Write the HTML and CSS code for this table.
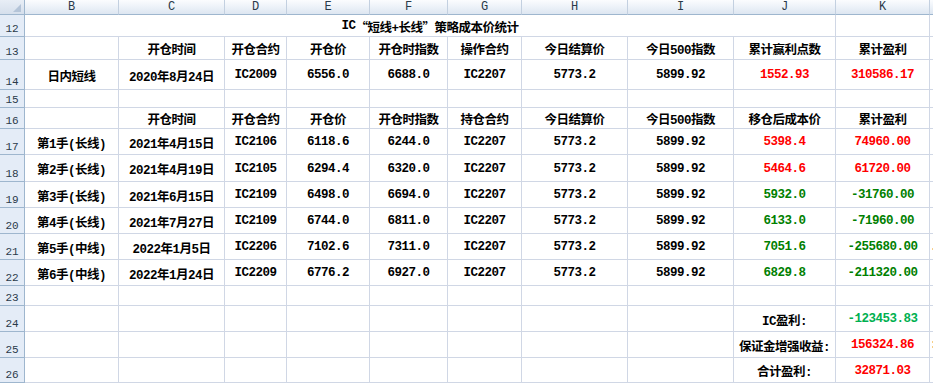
FILE: index.html
```html
<!DOCTYPE html>
<html lang="zh">
<head>
<meta charset="utf-8">
<title>IC策略成本价统计</title>
<link rel="stylesheet" href="styles.css">
</head>
<body>
<div class="sheet">
  <div class="h corner"><span class="tri"></span></div>
  <div class="h">B</div><div class="h">C</div><div class="h">D</div><div class="h">E</div><div class="h">F</div><div class="h">G</div><div class="h">H</div><div class="h">I</div><div class="h">J</div><div class="h">K</div><div class="h edge"></div>

  <div class="r">12</div>
  <div class="c title">IC<span class="q">“</span>短线+长线<span class="q">”</span>策略成本价统计</div><div class="c"></div><div class="c edge"></div>

  <div class="r">13</div>
  <div class="c"></div><div class="c">开仓时间</div><div class="c">开仓合约</div><div class="c">开仓价</div><div class="c">开仓时指数</div><div class="c">操作合约</div><div class="c">今日结算价</div><div class="c">今日500指数</div><div class="c">累计赢利点数</div><div class="c">累计盈利</div><div class="c edge"></div>

  <div class="r">14</div>
  <div class="c">日内短线</div><div class="c">2020年8月24日</div><div class="c">IC2009</div><div class="c">6556.0</div><div class="c">6688.0</div><div class="c">IC2207</div><div class="c">5773.2</div><div class="c">5899.92</div><div class="c red">1552.93</div><div class="c red">310586.17</div><div class="c edge"></div>

  <div class="r">15</div>
  <div class="c"></div><div class="c"></div><div class="c"></div><div class="c"></div><div class="c"></div><div class="c"></div><div class="c"></div><div class="c"></div><div class="c"></div><div class="c"></div><div class="c edge"></div>

  <div class="r">16</div>
  <div class="c"></div><div class="c">开仓时间</div><div class="c">开仓合约</div><div class="c">开仓价</div><div class="c">开仓时指数</div><div class="c">持仓合约</div><div class="c">今日结算价</div><div class="c">今日500指数</div><div class="c">移仓后成本价</div><div class="c">累计盈利</div><div class="c edge"></div>

  <div class="r">17</div>
  <div class="c">第1手(长线)</div><div class="c">2021年4月15日</div><div class="c">IC2106</div><div class="c">6118.6</div><div class="c">6244.0</div><div class="c">IC2207</div><div class="c">5773.2</div><div class="c">5899.92</div><div class="c red">5398.4</div><div class="c red">74960.00</div><div class="c edge"></div>

  <div class="r">18</div>
  <div class="c">第2手(长线)</div><div class="c">2021年4月19日</div><div class="c">IC2105</div><div class="c">6294.4</div><div class="c">6320.0</div><div class="c">IC2207</div><div class="c">5773.2</div><div class="c">5899.92</div><div class="c red">5464.6</div><div class="c red">61720.00</div><div class="c edge"></div>

  <div class="r">19</div>
  <div class="c">第3手(长线)</div><div class="c">2021年6月15日</div><div class="c">IC2109</div><div class="c">6498.0</div><div class="c">6694.0</div><div class="c">IC2207</div><div class="c">5773.2</div><div class="c">5899.92</div><div class="c green">5932.0</div><div class="c green">-31760.00</div><div class="c edge"></div>

  <div class="r">20</div>
  <div class="c">第4手(长线)</div><div class="c">2021年7月27日</div><div class="c">IC2109</div><div class="c">6744.0</div><div class="c">6811.0</div><div class="c">IC2207</div><div class="c">5773.2</div><div class="c">5899.92</div><div class="c green">6133.0</div><div class="c green">-71960.00</div><div class="c edge"></div>

  <div class="r">21</div>
  <div class="c">第5手(中线)</div><div class="c">2022年1月5日</div><div class="c">IC2206</div><div class="c">7102.6</div><div class="c">7311.0</div><div class="c">IC2207</div><div class="c">5773.2</div><div class="c">5899.92</div><div class="c green">7051.6</div><div class="c green">-255680.00</div><div class="c edge">.</div>

  <div class="r">22</div>
  <div class="c">第6手(中线)</div><div class="c">2022年1月24日</div><div class="c">IC2209</div><div class="c">6776.2</div><div class="c">6927.0</div><div class="c">IC2207</div><div class="c">5773.2</div><div class="c">5899.92</div><div class="c green">6829.8</div><div class="c green">-211320.00</div><div class="c edge"></div>

  <div class="r">23</div>
  <div class="c"></div><div class="c"></div><div class="c"></div><div class="c"></div><div class="c"></div><div class="c"></div><div class="c"></div><div class="c"></div><div class="c"></div><div class="c"></div><div class="c edge"></div>

  <div class="r">24</div>
  <div class="c"></div><div class="c"></div><div class="c"></div><div class="c"></div><div class="c"></div><div class="c"></div><div class="c"></div><div class="c"></div><div class="c">IC盈利:</div><div class="c ic">-123453.83</div><div class="c edge"></div>

  <div class="r">25</div>
  <div class="c"></div><div class="c"></div><div class="c"></div><div class="c"></div><div class="c"></div><div class="c"></div><div class="c"></div><div class="c"></div><div class="c">保证金增强收益:</div><div class="c red">156324.86</div><div class="c edge">:</div>

  <div class="r">26</div>
  <div class="c"></div><div class="c"></div><div class="c"></div><div class="c"></div><div class="c"></div><div class="c"></div><div class="c"></div><div class="c"></div><div class="c">合计盈利:</div><div class="c red">32871.03</div><div class="c edge"></div>
</div>
</body>
</html>
```
FILE: styles.css
```css
html, body {
  margin: 0;
  padding: 0;
  background: #ffffff;
  overflow: hidden;
}

.sheet {
  display: grid;
  grid-template-columns: 25px 94px 106px 62px 83px 78px 74px 106px 106px 102px 94px 4px;
  grid-template-rows: 15px 22px 23px 30px 18px 21px 26px 27px 26px 26px 26px 26px 20px 26px 26px 25px;
  width: 933px;
}

.h {
  box-sizing: border-box;
  background: linear-gradient(#fbfcfe 0%, #eef3f9 45%, #dde6f1 100%);
  border-right: 1px solid #c3d0e0;
  border-bottom: 1px solid #9eb6ce;
  font: 12px "Liberation Mono", monospace;
  color: #2a3a4a;
  display: flex;
  align-items: center;
  justify-content: center;
  line-height: 1;
  overflow: hidden;
}

.corner {
  justify-content: flex-end;
  align-items: flex-end;
  padding: 0 3px 2px 0;
  border-right: 1px solid #9eb6ce;
  background: linear-gradient(#e8eef6, #d5dfec);
}

.tri {
  width: 0;
  height: 0;
  border-left: 8px solid transparent;
  border-bottom: 8px solid #b4c4d8;
}

.r {
  box-sizing: border-box;
  background: #e4ecf7;
  border-right: 1px solid #9eb6ce;
  border-bottom: 1px solid #9eb6ce;
  font: 11px "Liberation Mono", monospace;
  color: #2a3a4a;
  display: flex;
  align-items: flex-end;
  justify-content: center;
  line-height: 1;
  padding-bottom: 1px;
}

.c {
  box-sizing: border-box;
  border-right: 1px solid #d0d7e5;
  border-bottom: 1px solid #d0d7e5;
  display: flex;
  align-items: center;
  justify-content: center;
  white-space: nowrap;
  overflow: hidden;
  font: bold 12.5px "Liberation Mono", "Noto Sans CJK SC", monospace;
  letter-spacing: -0.5px;
  color: #000000;
  padding-top: 1px;
}

.title {
  grid-column: span 9;
}

.q {
  font-family: "Noto Sans CJK SC", sans-serif;
}

.edge {
  border-right: none;
  justify-content: flex-start;
}

.red { color: #ff0000; }
.green { color: #008000; }
.ic { color: #00b050; }
```
